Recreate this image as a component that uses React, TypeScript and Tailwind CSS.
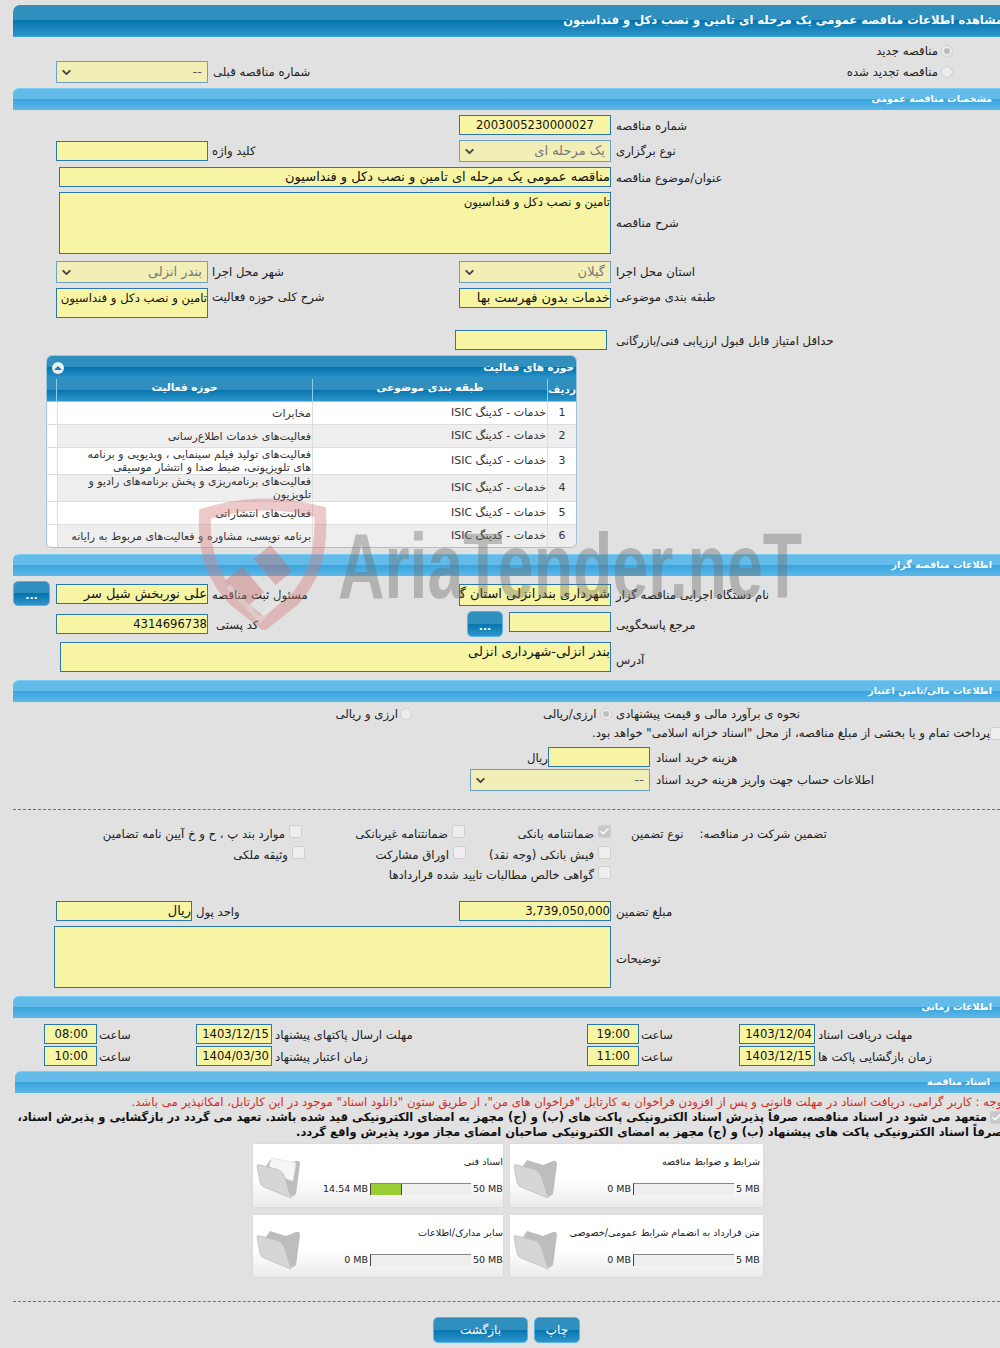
import type { ReactNode } from "react";
import { ChevronDown, Check } from "lucide-react";

const inputBox = "border border-[#2878ad] bg-[#f7f5a3] text-[#111] leading-[18px] whitespace-nowrap overflow-hidden";

function Bar({ title, className = "" }: { title: string; className?: string }) {
  return (
    <div
      dir="rtl"
      className={`h-[22px] rounded-tl-[6px] border-t border-[#7ccdf2] bg-[linear-gradient(#63bbe9_0,#63bbe9_48%,#39a4de_50%,#5eb8e8_100%)] pr-[26px] text-[9.5px] leading-[20px] font-bold text-white ${className}`}
    >
      {title}
    </div>
  );
}

function Label({ children, className = "" }: { children: ReactNode; className?: string }) {
  return (
    <span dir="rtl" className={`whitespace-nowrap text-left text-[11.7px] leading-[22px] text-[#222] ${className}`}>
      {children}
    </span>
  );
}

function Field({ text, className = "", ltr = false, small = false }: { text?: string; className?: string; ltr?: boolean; small?: boolean }) {
  return (
    <div
      dir={ltr ? "ltr" : "rtl"}
      className={`${inputBox} ${ltr ? "text-right text-[11.6px]" : small ? "text-[11.7px]" : "text-[13px]"} ${className}`}
    >
      {text}
    </div>
  );
}

function Select({ text, className = "", muted = false }: { text: string; className?: string; muted?: boolean }) {
  return (
    <div className={`flex h-[22px] items-center justify-between border border-[#6b9fc2] bg-[#f2efb6] pl-[3px] pr-[5px] ${className}`}>
      <ChevronDown size={13} strokeWidth={3.5} className="text-[#444]" />
      <span dir="rtl" className={`text-[13px] ${muted ? "text-[#777]" : "text-[#555]"}`}>
        {text}
      </span>
    </div>
  );
}

function Radio({ checked = false }: { checked?: boolean }) {
  return (
    <span className="flex h-[12px] w-[12px] shrink-0 items-center justify-center rounded-full border border-[#cfcfcf] bg-[#ececec]">
      {checked && <span className="h-[6px] w-[6px] rounded-full bg-[#bdbdbd]" />}
    </span>
  );
}

function Box({ checked = false }: { checked?: boolean }) {
  return (
    <span className={`flex h-[13px] w-[13px] shrink-0 items-center justify-center rounded-[2px] border border-[#cfcfcf] ${checked ? "bg-[#c8c8c8]" : "bg-[#eeeeee]"}`}>
      {checked && <Check size={11} strokeWidth={3} className="text-white" />}
    </span>
  );
}

function DotsButton({ className = "" }: { className?: string }) {
  return (
    <div className={`flex items-end justify-center rounded-[5px] border border-[#58b4e6] bg-[linear-gradient(#318fbd_0,#318fbd_48%,#0574ae_50%,#2e95ca_100%)] pb-[3px] text-[11px] leading-[12px] font-bold text-white ${className}`}>
      ...
    </div>
  );
}

function Guarantee({ text, checked = false, className = "" }: { text: string; checked?: boolean; className?: string }) {
  return (
    <div className={`flex items-start justify-end gap-[4px] ${className}`}>
      <Label className="leading-[20px]">{text}</Label>
      <span className="mt-[2px]">
        <Box checked={checked} />
      </span>
    </div>
  );
}

function Folder({ open = false }: { open?: boolean }) {
  return (
    <svg width="46" height="42" viewBox="0 0 46 42" className="shrink-0">
      <path d="M10 9 L14 3 L30 8 L40 4 Q44 3 44 7 L40 37 L36 40 L28 30 Z" fill="#bdbdbd" />
      {open && <path d="M13 9 L16 1 L40 6 L37 24 L24 20 Z" fill="#f6f6f6" stroke="#dddddd" strokeWidth="0.6" />}
      <path d="M1 9 Q1 7 4 8 L20 12 Q27 14 29 21 L35 41 L8 30 Q5 29 4 25 Z" fill="#d6d6d6" stroke="#bdbdbd" strokeWidth="0.8" />
    </svg>
  );
}

function DocCard({ title, used, total, pct = 0, className = "" }: { title: string; used: string; total: string; pct?: number; className?: string }) {
  return (
    <div className={`flex bg-[linear-gradient(#ffffff_0,#ffffff_55%,#ebebeb_100%)] shadow-[0_0_2px_#d0d0d0] ${className}`}>
      <div className="pl-[3px] pt-[13px]">
        <Folder open={pct > 0} />
      </div>
      <div className="min-w-0 flex-1">
        <div dir="rtl" className="mt-[11px] whitespace-nowrap text-[9.6px] leading-[14px] text-[#222]">
          {title}
        </div>
        <div className="mt-[14px] flex items-center justify-end gap-[2px] pr-[2px] text-[9.5px] leading-[12px] whitespace-nowrap text-[#222]">
          <span>{used}</span>
          <div className="h-[12px] w-[101px] border-t border-l border-t-[#888] border-l-[#444] bg-[#eeeeee]">
            <div className="h-full border-r border-[#444] bg-[#9acd32]" style={{ width: `${pct}%`, display: pct ? "block" : "none" }} />
          </div>
          <span className={total === "5 MB" ? "w-[22px] text-right" : "w-[28px] text-right"}>{total}</span>
        </div>
      </div>
    </div>
  );
}

function Watermark() {
  return (
    <div className="pointer-events-none absolute left-[198px] top-[498px] z-10 flex items-start">
      <svg width="132" height="132" viewBox="0 0 132 132" className="opacity-40">
        <path d="M7 16 Q64 -2 122 14 Q126 70 96 102 L66 126 L36 102 Q4 70 7 16 Z" fill="none" stroke="#d77b7b" strokeWidth="12" />
        <rect x="34" y="72" width="24" height="34" transform="rotate(-40 46 89)" fill="#c96a6a" />
        <rect x="64" y="50" width="22" height="34" transform="rotate(-40 75 67)" fill="#c96a6a" />
        <path d="M30 88 L62 122 L88 92" fill="none" stroke="#fff" strokeWidth="5" opacity="0.35" />
      </svg>
      <div dir="ltr" className="ml-[8px] mt-[18px] origin-top-left scale-x-[0.7] whitespace-nowrap [font-family:'Liberation_Sans',sans-serif] text-[92px] leading-[100px] font-bold text-[#6e6e6e] opacity-40">
        AriaTender.neT
      </div>
    </div>
  );
}

const rows = [
  { id: "1", field: "مخابرات", h: "h-[23px]", alt: false },
  { id: "2", field: "فعالیت‌های خدمات اطلاع‌رسانی", h: "h-[23px]", alt: true },
  { id: "3", field: "فعالیت‌های تولید فیلم سینمایی ، ویدیویی و برنامه های تلویزیونی، ضبط صدا و انتشار موسیقی", h: "h-[27px]", alt: false },
  { id: "4", field: "فعالیت‌های برنامه‌ریزی و پخش برنامه‌های رادیو و تلویزیون", h: "h-[27px]", alt: true },
  { id: "5", field: "فعالیت‌های انتشاراتی", h: "h-[23px]", alt: false },
  { id: "6", field: "برنامه نویسی، مشاوره و فعالیت‌های مربوط به رایانه", h: "h-[23px]", alt: true },
];

function ActivityPanel() {
  return (
    <div className="ml-[46px] mt-[5px] h-[193px] w-[531px] overflow-hidden rounded-[6px] border border-[#9cc4dc]">
      <div className="flex h-[23px] items-center justify-between bg-[linear-gradient(#318fbd_0,#318fbd_48%,#0574ae_50%,#2e95ca_100%)] pl-[5px] pr-[2px]">
        <span className="flex h-[12px] w-[12px] items-center justify-center rounded-full bg-[#e8f1f6]">
          <span className="h-0 w-0 border-x-[4px] border-b-[4px] border-x-transparent border-b-[#2878ad]" />
        </span>
        <span dir="rtl" className="text-[10.5px] font-bold text-white">حوزه های فعالیت</span>
      </div>
      <div className="flex h-[23px] border-b border-[#7ccdf2] bg-[linear-gradient(#318fbd_0,#318fbd_48%,#0574ae_50%,#2e95ca_100%)] text-[10.5px] font-bold text-white">
        <div className="w-[10px] border-r border-[#8fcbea]" />
        <div dir="rtl" className="w-[256px] border-r border-[#8fcbea] pt-[1px] text-center">حوزه فعالیت</div>
        <div dir="rtl" className="w-[235px] border-r border-[#8fcbea] pt-[1px] text-center">طبقه بندی موضوعی</div>
        <div dir="rtl" className="flex-1 pt-[3px] text-right">ردیف</div>
      </div>
      {rows.map((r) => (
        <div key={r.id} className={`flex border-b border-[#dddddd] text-[11px] text-[#333] ${r.h} ${r.alt ? "bg-[#eeeeee]" : "bg-white"}`}>
          <div className="w-[10px] bg-white" />
          <div dir="rtl" className="flex w-[256px] items-center border-x border-[#dddddd] pr-[1px] pl-[12px] leading-[13px]">
            <span>{r.field}</span>
          </div>
          <div dir="rtl" className="flex w-[235px] items-center border-r border-[#dddddd] pr-[1px]">
            خدمات - کدینگ ISIC
          </div>
          <div className="flex flex-1 items-center justify-center text-[11px]">{r.id}</div>
        </div>
      ))}
    </div>
  );
}

export default function App() {
  return (
    <div className="relative h-[1348px] w-[1000px] overflow-hidden bg-[#e1e1e1] [font-family:'DejaVu_Sans',sans-serif] text-[12px]">
      <Watermark />
      <div className="w-[1020px] pt-[5px]">
        <div dir="rtl" className="ml-[13px] h-[32px] w-[1005px] rounded-tl-[7px] border-b border-[#3ca5dc] bg-[linear-gradient(#318fbd_0,#318fbd_50%,#0574ae_50%,#2e95ca_100%)] pr-[15px] text-[11.5px] leading-[31px] font-bold text-white">
          مشاهده اطلاعات مناقصه عمومی یک مرحله ای تامین و نصب دکل و فنداسیون
        </div>

        <div className="mt-[4px] flex h-[20px] w-[1000px] items-center justify-end gap-[3px] pr-[47px]">
          <Label>مناقصه جدید</Label>
          <Radio checked />
        </div>
        <div className="flex h-[22px] w-[1000px] items-center pl-[56px] pr-[47px]">
          <Select text="--" className="w-[152px]" />
          <Label className="ml-[5px]">شماره مناقصه قبلی</Label>
          <div className="ml-auto flex items-center gap-[3px]">
            <Label>مناقصه تجدید شده</Label>
            <Radio />
          </div>
        </div>

        <Bar title="مشخصات مناقصه عمومی" className="ml-[13px] mt-[5px] w-[1005px]" />

        <div className="ml-[459px] mt-[5px] flex h-[20px]">
          <Field ltr text="2003005230000027" className="h-[20px] w-[152px] pr-[16px]" />
          <Label className="ml-[5px]">شماره مناقصه</Label>
        </div>
        <div className="ml-[56px] mt-[5px] flex h-[22px]">
          <Field className="mt-[1px] h-[20px] w-[152px]" />
          <Label className="ml-[4px] w-[247px]">کلید واژه</Label>
          <Select text="یک مرحله ای" muted className="w-[152px]" />
          <Label className="ml-[5px]">نوع برگزاری</Label>
        </div>
        <div className="ml-[59px] mt-[5px] flex h-[20px]">
          <Field text="مناقصه عمومی یک مرحله ای تامین و نصب دکل و فنداسیون" className="h-[20px] w-[552px]" />
          <Label className="ml-[5px]">عنوان/موضوع مناقصه</Label>
        </div>
        <div className="ml-[59px] mt-[5px] flex h-[62px] items-center">
          <Field small text="تامین و نصب دکل و فنداسیون" className="h-[62px] w-[552px]" />
          <Label className="ml-[5px]">شرح مناقصه</Label>
        </div>
        <div className="ml-[56px] mt-[7px] flex h-[22px]">
          <Select text="بندر انزلی" muted className="w-[152px]" />
          <Label className="ml-[4px] w-[247px]">شهر محل اجرا</Label>
          <Select text="گیلان" muted className="w-[152px]" />
          <Label className="ml-[5px]">استان محل اجرا</Label>
        </div>
        <div className="ml-[56px] mt-[5px] flex h-[30px]">
          <Field small text="تامین و نصب دکل و فنداسیون" className="h-[30px] w-[152px]" />
          <Label className="ml-[4px] -mt-[2px] w-[247px]">شرح کلی حوزه فعالیت</Label>
          <Field text="خدمات بدون فهرست بها" className="h-[20px] w-[152px]" />
          <Label className="ml-[5px] -mt-[2px]">طبقه بندی موضوعی</Label>
        </div>
        <div className="ml-[455px] mt-[12px] flex h-[20px]">
          <Field className="h-[20px] w-[152px]" />
          <Label className="ml-[9px]">حداقل امتیاز قابل قبول ارزیابی فنی/بازرگانی</Label>
        </div>

        <ActivityPanel />

        <Bar title="اطلاعات مناقصه گزار" className="ml-[13px] mt-[6px] w-[1005px]" />

        <div className="ml-[13px] mt-[5px] flex h-[25px]">
          <DotsButton className="h-[25px] w-[37px]" />
          <Field text="علی نوربخش شیل سر" className="ml-[6px] mt-[3px] h-[20px] w-[152px] text-[13.5px]" />
          <Label className="ml-[4px] mt-[3px] w-[247px]">مسئول ثبت مناقصه</Label>
          <Field text="شهرداری بندرانزلی استان گیلان" className="mt-[3px] h-[22px] w-[152px]" />
          <Label className="ml-[5px] mt-[3px]">نام دستگاه اجرایی مناقصه گزار</Label>
        </div>
        <div className="ml-[56px] mt-[5px] flex h-[26px]">
          <Field ltr text="4314696738" className="mt-[3px] h-[20px] w-[152px]" />
          <Label className="ml-[8px] mt-[3px] w-[251px]">کد پستی</Label>
          <DotsButton className="h-[26px] w-[36px]" />
          <Field className="ml-[6px] mt-[1px] h-[20px] w-[102px]" />
          <Label className="ml-[5px] mt-[3px]">مرجع پاسخگویی</Label>
        </div>
        <div className="ml-[60px] mt-[5px] flex h-[30px]">
          <Field text="بندر انزلی-شهرداری انزلی" className="h-[30px] w-[551px] text-[10.7px]" />
          <Label className="ml-[5px] mt-[7px]">آدرس</Label>
        </div>

        <Bar title="اطلاعات مالی/تامین اعتبار" className="ml-[13px] mt-[8px] w-[1005px]" />

        <div className="ml-[338px] mt-[3px] flex h-[18px] items-center">
          <Label className="w-[60px]">ارزی و ریالی</Label>
          <span className="ml-[2px]"><Radio /></span>
          <Label className="ml-[131px] w-[54px]">ارزی/ریالی</Label>
          <span className="ml-[3px]"><Radio checked /></span>
          <Label className="ml-[4px]">نحوه ی برآورد مالی و قیمت پیشنهادی</Label>
        </div>
        <div className="mt-[1px] flex h-[18px] w-[1003px] items-center justify-end">
          <Label>پرداخت تمام و یا بخشی از مبلغ مناقصه، از محل "اسناد خزانه اسلامی" خواهد بود.</Label>
          <Box />
        </div>
        <div className="ml-[529px] mt-[5px] flex h-[20px]">
          <Label className="w-[19px]">ریال</Label>
          <Field className="h-[20px] w-[102px]" />
          <Label className="ml-[6px]">هزینه خرید اسناد</Label>
        </div>
        <div className="ml-[470px] mt-[2px] flex h-[22px]">
          <Select text="--" className="w-[180px]" />
          <Label className="ml-[6px]">اطلاعات حساب جهت واریز هزینه خرید اسناد</Label>
        </div>

        <div className="ml-[13px] mt-[18px] w-[987px] border-t border-dashed border-[#2a87bb]" />

        <div className="mt-[13px] flex h-[20px] w-[830px]">
          <div className="flex w-[611px] justify-end">
            <Guarantee text="موارد بند پ ، ح و خ آیین نامه تضامین" />
            <Guarantee text="ضمانتنامه غیربانکی" className="w-[163px]" />
            <Guarantee text="ضمانتنامه بانکی" checked className="w-[146px]" />
          </div>
          <Label className="ml-[20px] leading-[20px]">نوع تضمین</Label>
          <Label className="ml-[16px] leading-[20px]">تضمین شرکت در مناقصه:</Label>
        </div>
        <div className="mt-px flex h-[20px] w-[611px] justify-end">
          <Guarantee text="وثیقه ملکی" />
          <Guarantee text="اوراق مشارکت" className="w-[161px]" />
          <Guarantee text="فیش بانکی (وجه نقد)" className="w-[145px]" />
        </div>
        <div className="flex h-[20px] w-[611px] justify-end">
          <Guarantee text="گواهی خالص مطالبات تایید شده قراردادها" />
        </div>

        <div className="ml-[56px] mt-[17px] flex h-[20px]">
          <Field text="ریال" className="h-[20px] w-[136px]" />
          <Label className="ml-[4px] w-[263px]">واحد پول</Label>
          <Field ltr text="3,739,050,000" className="h-[20px] w-[152px]" />
          <Label className="ml-[5px]">مبلغ تضمین</Label>
        </div>
        <div className="ml-[54px] mt-[5px] flex h-[62px]">
          <Field className="h-[62px] w-[557px]" />
          <Label className="ml-[5px] mt-[22px]">توضیحات</Label>
        </div>

        <Bar title="اطلاعات زمانی" className="ml-[13px] mt-[8px] w-[1005px]" />

        <div className="ml-[44px] mt-[6px] flex h-[20px]">
          <Field ltr text="08:00" className="h-[20px] w-[53px] pr-[8px]" />
          <Label className="ml-[2px] w-[97px]">ساعت</Label>
          <Field ltr text="1403/12/15" className="h-[20px] w-[76px] pr-[2px]" />
          <Label className="ml-[3px] w-[312px]">مهلت ارسال پاکتهای پیشنهاد</Label>
          <Field ltr text="19:00" className="h-[20px] w-[52px] pr-[8px]" />
          <Label className="ml-[2px] w-[98px]">ساعت</Label>
          <Field ltr text="1403/12/04" className="h-[20px] w-[76px] pr-[2px]" />
          <Label className="ml-[3px]">مهلت دریافت اسناد</Label>
        </div>
        <div className="ml-[44px] mt-[2px] flex h-[20px]">
          <Field ltr text="10:00" className="h-[20px] w-[53px] pr-[8px]" />
          <Label className="ml-[2px] w-[97px]">ساعت</Label>
          <Field ltr text="1404/03/30" className="h-[20px] w-[76px] pr-[2px]" />
          <Label className="ml-[3px] w-[312px]">زمان اعتبار پیشنهاد</Label>
          <Field ltr text="11:00" className="h-[20px] w-[52px] pr-[8px]" />
          <Label className="ml-[2px] w-[98px]">ساعت</Label>
          <Field ltr text="1403/12/15" className="h-[20px] w-[76px] pr-[2px]" />
          <Label className="ml-[3px]">زمان بازگشایی پاکت ها</Label>
        </div>

        <Bar title="اسناد مناقصه" className="ml-[15px] mt-[5px] h-[21px] w-[1001px]" />

        <div dir="rtl" className="mt-[1px] h-[16px] w-[1006px] whitespace-nowrap text-[11.7px] leading-[16px] text-[#d42a1c]">
          توجه : کاربر گرامی، دریافت اسناد در مهلت قانونی و پس از افزودن فراخوان به کارتابل "فراخوان های من"، از طریق ستون "دانلود اسناد" موجود در این کارتابل، امکانپذیر می باشد.
        </div>
        <div className="flex h-[15px] w-[1003px] items-center justify-end gap-[3px]">
          <span dir="rtl" className="whitespace-nowrap text-[11.5px] leading-[15px] font-bold text-[#111]">
            متعهد می شود در اسناد مناقصه، صرفاً پذیرش اسناد الکترونیکی پاکت های (ب) و (ج) مجهز به امضای الکترونیکی قید شده باشد. تعهد می گردد در بازگشایی و پذیرش اسناد،
          </span>
          <Box checked />
        </div>
        <div dir="rtl" className="h-[15px] w-[1003px] whitespace-nowrap text-[11.5px] leading-[15px] font-bold text-[#111]">
          صرفاً اسناد الکترونیکی پاکت های پیشنهاد (ب) و (ج) مجهز به امضای الکترونیکی صاحبان امضای مجاز مورد پذیرش واقع گردد.
        </div>

        <div className="ml-[253px] mt-[4px] flex h-[63px] gap-[7px]">
          <DocCard title="اسناد فنی" used="14.54 MB" total="50 MB" pct={31} className="w-[250px]" />
          <DocCard title="شرایط و ضوابط مناقصه" used="0 MB" total="5 MB" className="w-[253px] pr-[3px]" />
        </div>
        <div className="ml-[253px] mt-[8px] flex h-[62px] gap-[7px]">
          <DocCard title="سایر مدارک/اطلاعات" used="0 MB" total="50 MB" className="w-[250px]" />
          <DocCard title="متن قرارداد به انضمام شرایط عمومی/خصوصی" used="0 MB" total="5 MB" className="w-[253px] pr-[3px]" />
        </div>

        <div className="ml-[13px] mt-[24px] w-[987px] border-t border-dashed border-[#2a87bb]" />

        <div className="ml-[433px] mt-[15px] flex h-[26px] gap-[6px] text-[12px] text-white">
          <div dir="rtl" className="w-[95px] rounded-[5px] border border-[#58b4e6] bg-[linear-gradient(#318fbd_0,#318fbd_48%,#0574ae_50%,#2e95ca_100%)] text-center leading-[24px]">بازگشت</div>
          <div dir="rtl" className="w-[46px] rounded-[5px] border border-[#58b4e6] bg-[linear-gradient(#318fbd_0,#318fbd_48%,#0574ae_50%,#2e95ca_100%)] text-center leading-[24px]">چاپ</div>
        </div>
      </div>
    </div>
  );
}
